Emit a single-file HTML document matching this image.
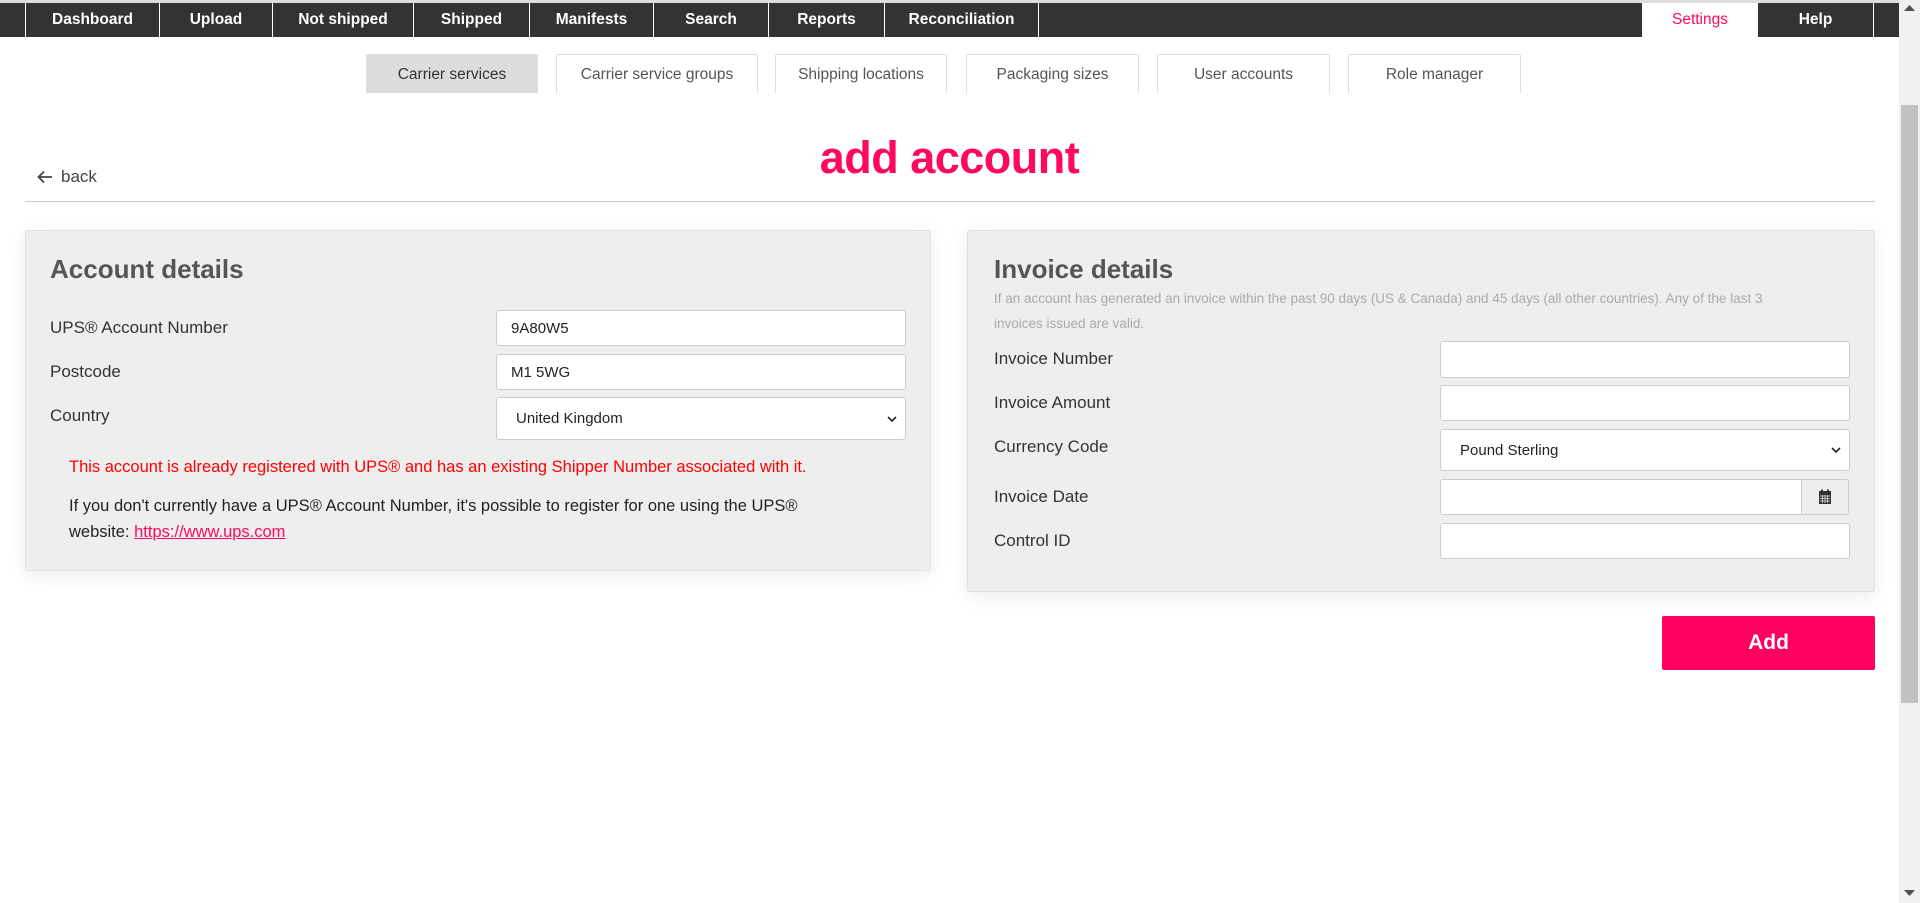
<!DOCTYPE html>
<html><head><meta charset="utf-8"><style>
*{box-sizing:border-box;margin:0;padding:0}
body{width:1920px;height:903px;overflow:hidden;background:#fff;font-family:"Liberation Sans",Arial,sans-serif;position:relative;color:#333}
.a{position:absolute}
.top{left:0;top:0;width:1899px;height:3px;background:#dcdcdc}
.nav{left:0;top:3px;width:1899px;height:34px;background:#333}
.ni{position:absolute;top:3px;height:34px;color:#fff;font-size:15.5px;font-weight:bold;display:flex;align-items:center;justify-content:center;border-left:1px solid #fff}
.tab{position:absolute;top:54px;height:39px;border:1px solid #ddd;border-bottom:none;border-radius:2px 2px 0 0;font-size:15.5px;color:#555;display:flex;align-items:center;justify-content:center;background:#fff;padding-top:2px}
.panel{position:absolute;background:#eee;border:1px solid #e0e0e0;border-radius:3px;box-shadow:0 4px 18px rgba(0,0,0,.08)}
.h{position:absolute;font-size:26px;font-weight:bold;color:#555}
.lab{position:absolute;font-size:17px;color:#333}
.inp{position:absolute;background:#fff;border:1px solid #ccc;border-radius:3px;font-size:15px;color:#222;display:flex;align-items:center;padding-left:14px}
.sel{padding-left:19px}
.chev{position:absolute;right:8px;top:50%;margin-top:-5px}
</style></head><body>
<div class="a top"></div>
<div class="a nav"></div>
<div class="ni" style="left:25px;width:134px">Dashboard</div>
<div class="ni" style="left:159px;width:113px">Upload</div>
<div class="ni" style="left:272px;width:141px">Not shipped</div>
<div class="ni" style="left:413px;width:116px">Shipped</div>
<div class="ni" style="left:529px;width:124px">Manifests</div>
<div class="ni" style="left:653px;width:115px">Search</div>
<div class="ni" style="left:768px;width:116px">Reports</div>
<div class="ni" style="left:884px;width:155px;border-right:1px solid #fff">Reconciliation</div>
<div class="ni" style="left:1642px;width:116px;background:#fff;color:#ff0a5a;font-weight:normal;border-left:none">Settings</div>
<div class="ni" style="left:1758px;width:116px;border-left:none;border-right:1px solid #fff">Help</div>

<div class="tab" style="left:366px;width:172px;background:#ddd;border-color:#ddd;color:#333">Carrier services</div>
<div class="tab" style="left:556px;width:202px">Carrier service groups</div>
<div class="tab" style="left:775px;width:172px">Shipping locations</div>
<div class="tab" style="left:966px;width:173px">Packaging sizes</div>
<div class="tab" style="left:1157px;width:173px">User accounts</div>
<div class="tab" style="left:1348px;width:173px">Role manager</div>

<div class="a" style="left:0;width:1899px;top:132px;text-align:center;font-size:45px;font-weight:bold;color:#ff0a5a;letter-spacing:-0.5px">add account</div>
<svg class="a" style="left:37px;top:170px" width="16" height="14" viewBox="0 0 16 14"><path d="M15 7H2M7 1.5L1.5 7 7 12.5" stroke="#444" stroke-width="1.8" fill="none"/></svg>
<div class="a" style="left:61px;top:167px;font-size:17px;color:#444">back</div>
<div class="a" style="left:25px;top:201px;width:1850px;height:1px;background:#ccc"></div>

<div class="panel" style="left:25px;top:230px;width:906px;height:341px"></div>
<div class="h" style="left:50px;top:254px">Account details</div>
<div class="lab" style="left:50px;top:318px">UPS® Account Number</div>
<div class="lab" style="left:50px;top:362px">Postcode</div>
<div class="lab" style="left:50px;top:406px">Country</div>
<div class="inp" style="left:496px;top:310px;width:410px;height:36px">9A80W5</div>
<div class="inp" style="left:496px;top:354px;width:410px;height:36px">M1 5WG</div>
<div class="inp sel" style="left:496px;top:397px;width:410px;height:43px">United Kingdom<svg class="chev" width="10" height="10" viewBox="0 0 10 10"><path d="M1 3l4 4 4-4" stroke="#222" stroke-width="1.6" fill="none"/></svg></div>
<div class="a" style="left:69px;top:458px;font-size:16.5px;color:#f00">This account is already registered with UPS® and has an existing Shipper Number associated with it.</div>
<div class="a" style="left:69px;top:493px;width:790px;font-size:16.5px;line-height:26px;color:#222">If you don't currently have a UPS® Account Number, it's possible to register for one using the UPS® website: <span style="color:#ff0a5a;text-decoration:underline">https://www.ups.com</span></div>

<div class="panel" style="left:967px;top:230px;width:908px;height:362px"></div>
<div class="h" style="left:994px;top:254px">Invoice details</div>
<div class="a" style="left:994px;top:286px;width:790px;font-size:13.5px;line-height:25px;color:#aaa">If an account has generated an invoice within the past 90 days (US &amp; Canada) and 45 days (all other countries). Any of the last 3 invoices issued are valid.</div>
<div class="lab" style="left:994px;top:349px">Invoice Number</div>
<div class="lab" style="left:994px;top:393px">Invoice Amount</div>
<div class="lab" style="left:994px;top:437px">Currency Code</div>
<div class="lab" style="left:994px;top:487px">Invoice Date</div>
<div class="lab" style="left:994px;top:531px">Control ID</div>
<div class="inp" style="left:1440px;top:341px;width:410px;height:37px"></div>
<div class="inp" style="left:1440px;top:385px;width:410px;height:36px"></div>
<div class="inp sel" style="left:1440px;top:429px;width:410px;height:42px">Pound Sterling<svg class="chev" width="10" height="10" viewBox="0 0 10 10"><path d="M1 3l4 4 4-4" stroke="#222" stroke-width="1.6" fill="none"/></svg></div>
<div class="inp" style="left:1440px;top:479px;width:362px;height:36px;border-radius:3px 0 0 3px"></div>
<div class="a" style="left:1801px;top:479px;width:48px;height:36px;background:#eee;border:1px solid #ccc;border-radius:0 3px 3px 0;display:flex;align-items:center;justify-content:center"><svg width="14" height="16" viewBox="0 0 14 16"><rect x="1" y="2" width="12" height="13" fill="#333"/><rect x="3" y="0.5" width="2" height="3" fill="#333"/><rect x="9" y="0.5" width="2" height="3" fill="#333"/><path d="M2 7h10M2 9.5h10M2 12h10M4.5 6v8M7 6v8M9.5 6v8" stroke="#ddd" stroke-width="0.8"/></svg></div>
<div class="inp" style="left:1440px;top:523px;width:410px;height:36px"></div>

<div class="a" style="left:1662px;top:616px;width:213px;height:54px;background:#ff0060;border-radius:2px;color:#fff;font-size:21px;font-weight:bold;display:flex;align-items:center;justify-content:center">Add</div>

<div class="a" style="left:1899px;top:0;width:21px;height:903px;background:#f1f1f1"></div>
<div class="a" style="left:1901px;top:105px;width:17px;height:598px;background:#c1c1c1"></div>
<svg class="a" style="left:1904px;top:5px" width="11" height="7"><path d="M0 6L5.5 0 11 6z" fill="#505050"/></svg>
<svg class="a" style="left:1904px;top:890px" width="11" height="7"><path d="M0 0L5.5 6 11 0z" fill="#505050"/></svg>
</body></html>
